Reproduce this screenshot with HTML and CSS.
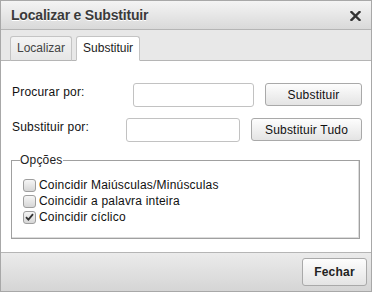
FILE: index.html
```html
<!DOCTYPE html>
<html lang="pt">
<head>
    <meta charset="UTF-8">
    <title>Localizar e Substituir</title>
    <link rel="stylesheet" href="styles.css">
</head>
<body>
    <div class="dialog">
        <div class="titlebar">
            <span class="title">Localizar e Substituir</span>
            <span class="close">
                <svg width="11" height="10" viewBox="0 0 11 10">
                    <path d="M1.5 1 L9.5 9 M9.5 1 L1.5 9" stroke="#333" stroke-width="2.4" stroke-linecap="square"/>
                </svg>
            </span>
        </div>

        <div class="tabbar">
            <div class="tab">Localizar</div>
            <div class="tab active">Substituir</div>
        </div>

        <div class="content">
            <div class="form-row">
                <span class="label">Procurar por:</span>
                <input class="text-input find-input" type="text">
                <button class="button find-button">Substituir</button>
            </div>
            <div class="form-row">
                <span class="label">Substituir por:</span>
                <input class="text-input replace-input" type="text">
                <button class="button replace-button">Substituir Tudo</button>
            </div>

            <fieldset class="options">
                <legend>Opções</legend>
                <label class="check-row">
                    <span class="check-box"></span>
                    Coincidir Maiúsculas/Minúsculas
                </label>
                <label class="check-row">
                    <span class="check-box"></span>
                    Coincidir a palavra inteira
                </label>
                <label class="check-row">
                    <span class="check-box checked">
                        <svg width="9" height="8" viewBox="0 0 9 8">
                            <path d="M1 4.2 L3.4 6.6 L8 1.2" stroke="#333" stroke-width="1.8" fill="none"/>
                        </svg>
                    </span>
                    Coincidir cíclico
                </label>
            </fieldset>
        </div>

        <div class="footer">
            <button class="button close-button">Fechar</button>
        </div>
    </div>
</body>
</html>
```

FILE: styles.css
```css
body {
    margin: 0;
    font-family: "Liberation Sans", Arial, sans-serif;
    font-size: 12px;
    letter-spacing: 0.2px;
    background-color: #fff;
}

.dialog {
    width: 372px;
    height: 292px;
    box-sizing: border-box;
    border: 1px solid #a8a8a8;
    display: flex;
    flex-direction: column;
}

.titlebar {
    height: 28px;
    flex-shrink: 0;
    display: flex;
    align-items: center;
    justify-content: space-between;
    padding: 0 10px 0 10px;
    background: linear-gradient(#f4f4f4, #d9d9d9);
    border-bottom: 1px solid #b5b5b5;
}

.title {
    font-size: 14px;
    font-weight: bold;
    letter-spacing: -0.2px;
    color: #3a3a3a;
    text-shadow: 0 1px 0 #fff;
}

.close {
    display: flex;
    margin-top: 1px;
}

.tabbar {
    height: 25px;
    flex-shrink: 0;
    display: flex;
    align-items: flex-end;
    gap: 4px;
    padding: 5px 0 0 9px;
    background-color: #e8e8e8;
    border-bottom: 1px solid #b5b5b5;
}

.tab {
    height: 25px;
    box-sizing: border-box;
    padding: 0 6px;
    line-height: 23px;
    letter-spacing: 0;
    color: #444;
    border: 1px solid #c4c4c4;
    border-bottom: 1px solid #b5b5b5;
    border-radius: 3px 3px 0 0;
    background: linear-gradient(#f4f4f4, #e6e6e6);
    margin-bottom: -1px;
}

.tab.active {
    background: #fff;
    color: #222;
    border-bottom-color: #fff;
}

.content {
    flex: 1;
    background: #fff;
    padding: 22px 9px 0 11px;
    border-bottom: 1px solid #b5b5b5;
}

.form-row {
    display: flex;
    align-items: flex-start;
    margin-bottom: 11px;
}

.label {
    margin-right: auto;
    padding-top: 2px;
    color: #111;
}

.text-input {
    height: 24px;
    box-sizing: border-box;
    border: 1px solid #c2c2c2;
    border-radius: 3px;
    margin: 0 11px 0 0;
    padding: 0 4px;
    font: inherit;
}

.find-input {
    width: 121px;
}

.replace-input {
    width: 114px;
}

.button {
    height: 23px;
    box-sizing: border-box;
    padding: 0;
    border: 1px solid #a9a9a9;
    border-radius: 3px;
    background: linear-gradient(#fdfdfd, #e4e4e4);
    font-family: inherit;
    font-size: 12px;
    letter-spacing: 0.2px;
    color: #111;
}

.find-button {
    width: 97px;
}

.replace-button {
    width: 111px;
}

.options {
    margin: 9px 2px 0 -1px;
    padding: 0 8px 13px 8px;
    border: 1px solid #a0a0a0;
    box-shadow: inset -1px -1px 0 #dcdcdc;
}

.options legend {
    padding: 0;
    color: #222;
}

.check-row {
    display: flex;
    align-items: center;
    gap: 3px;
    height: 16px;
    margin-left: 3px;
    color: #111;
}

.check-row:first-of-type {
    margin-top: 10px;
}

.check-box {
    width: 13px;
    height: 13px;
    box-sizing: border-box;
    border: 1px solid #9e9e9e;
    border-radius: 3px;
    background: linear-gradient(#f6f6f6, #d6d6d6);
    display: flex;
    align-items: center;
    justify-content: center;
}

.footer {
    height: 38px;
    flex-shrink: 0;
    display: flex;
    justify-content: flex-end;
    align-items: flex-start;
    padding: 5px 4px 0 0;
    box-sizing: border-box;
    background: linear-gradient(#ebebeb, #d5d5d5);
}

.close-button {
    width: 65px;
    height: 28px;
    font-weight: bold;
    color: #222;
}
```
